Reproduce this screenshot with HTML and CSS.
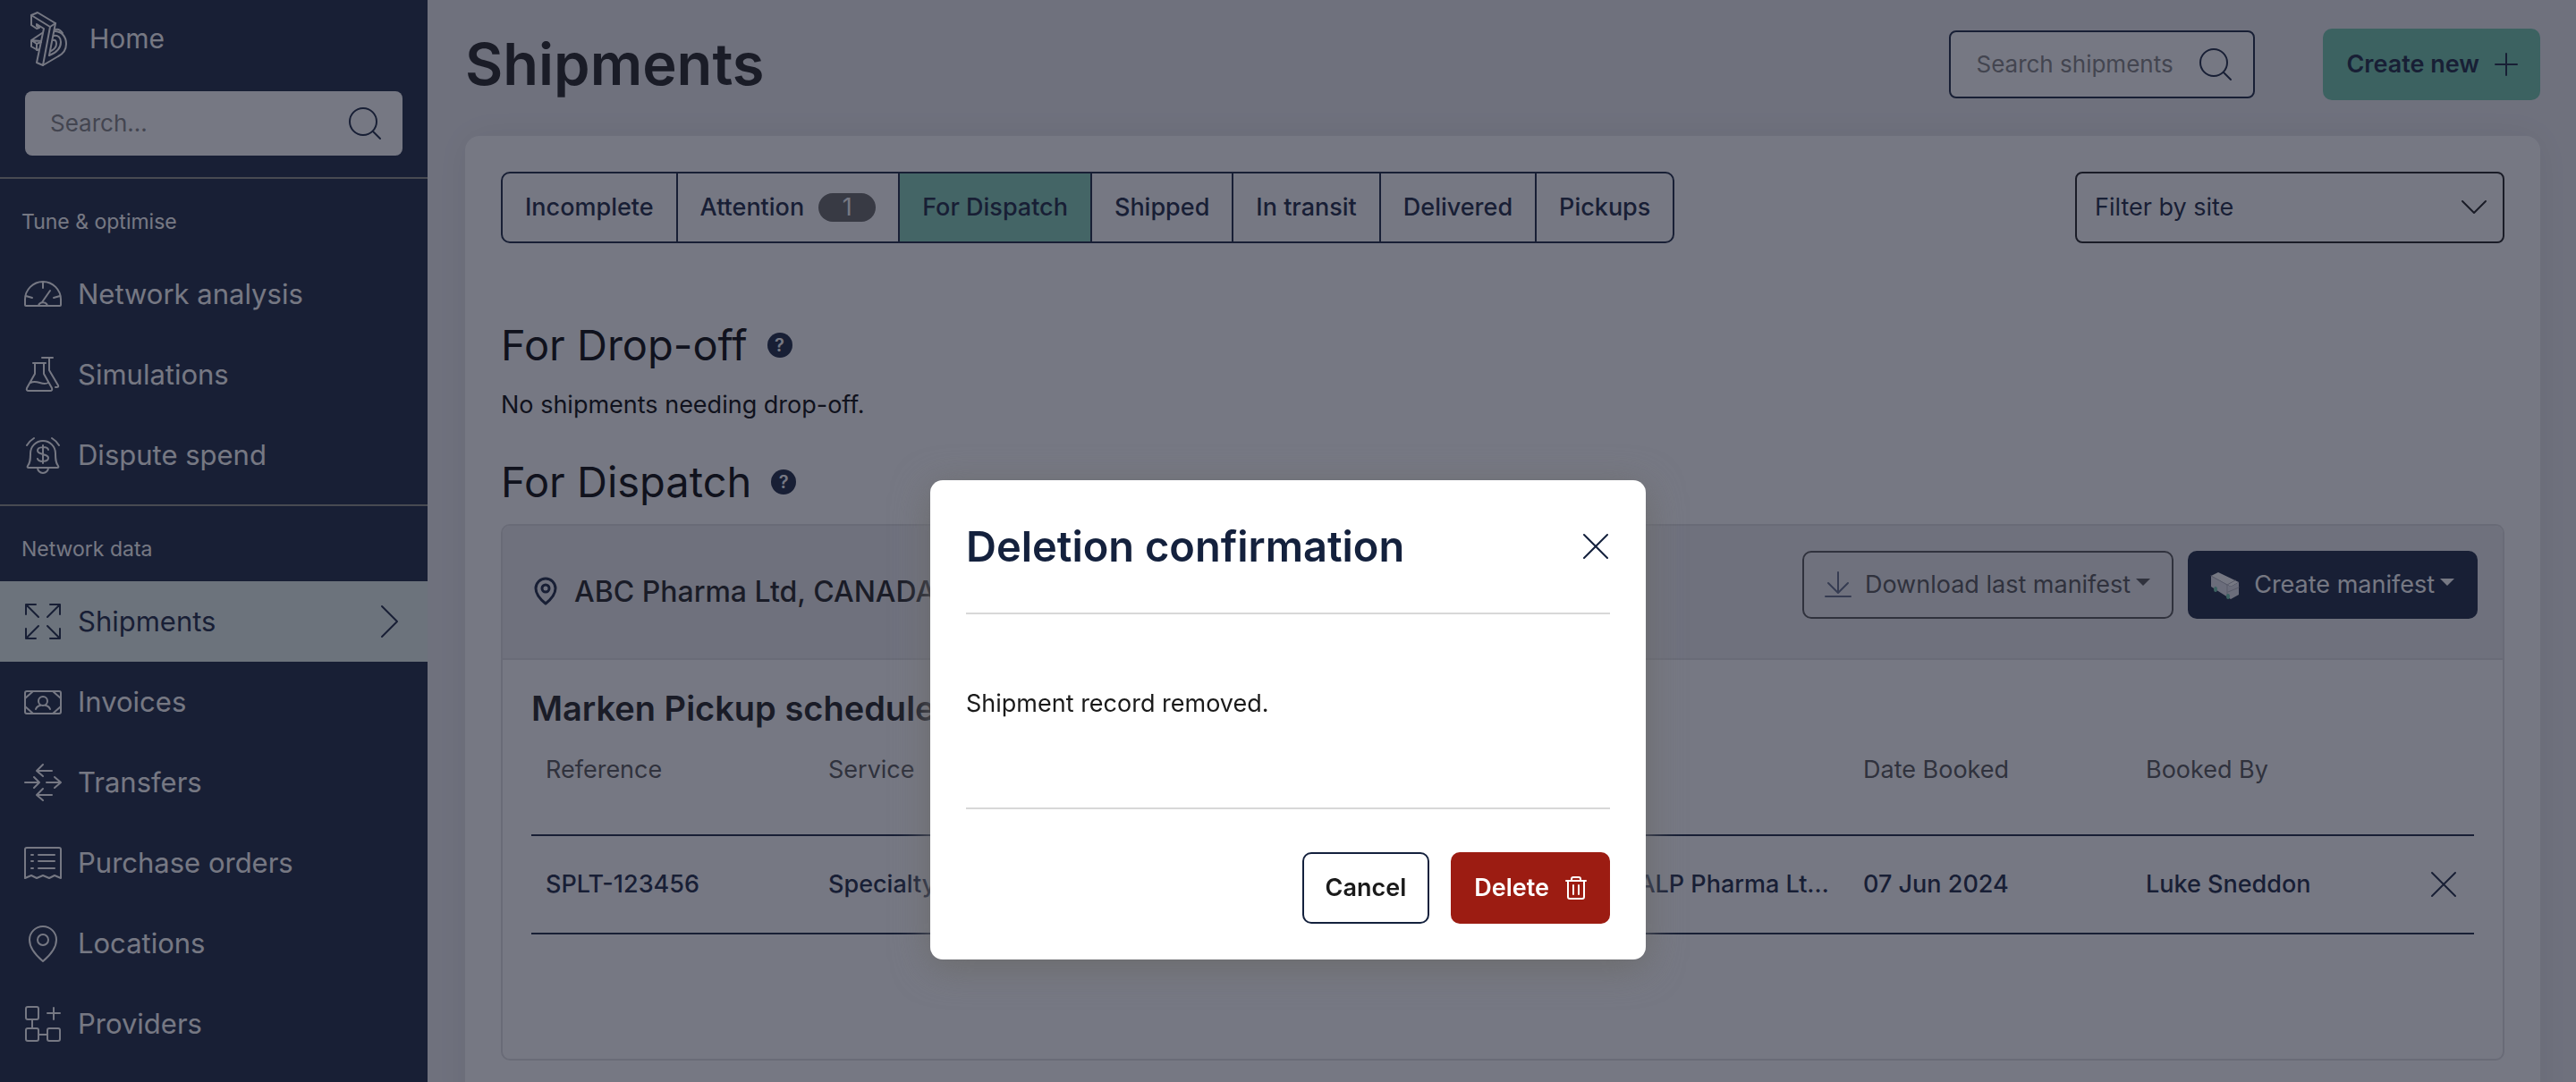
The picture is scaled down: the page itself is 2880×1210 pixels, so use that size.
FILE: index.html
```html
<!DOCTYPE html>
<html lang="en">
<head>
    <meta charset="UTF-8">
    <meta name="viewport" content="width=device-width, initial-scale=1.0">
    <title>Shipments</title>
    <link rel="stylesheet" href="styles.css">
</head>
<body>
    <div class="app">
        <aside class="sidebar">
            <a class="home-link" href="#">
                <svg class="logo" viewBox="0 0 42 61" aria-hidden="true">
                    <path d="M1 4 8 1l20 12-6 4Z"/>
                    <path d="M1 4v11l6 4 3-1-3-2v-2l8 5L7 57l7 3 8-43"/>
                    <path d="M28 13 21 49"/>
                    <path d="M27 22c8 0 13 6 13 14 0 6-3 11-9 14l-17 10"/>
                    <path d="M26 27c5-1 8 2 8 7 0 7-5 12-13 15"/>
                    <path d="M25 32c3-1 4 1 4 4 0 4-2 6-6 8"/>
                    <path d="M28 20c3-1 6 1 8 4M13 24 1 32v7l7 4 2-1M1 32l6 4v7M7 36l5-2M1 32l11 1"/>
                </svg>
                <span>Home</span>
            </a>
            <form class="sidebar-search">
                <input type="text" placeholder="Search..." aria-label="Search">
                <button class="icon-button" type="submit" aria-label="Search">
                    <svg class="icon-search" viewBox="0 0 36 36" aria-hidden="true"><circle cx="16" cy="16" r="15"/><path d="m27 27 8 8"/></svg>
                </button>
            </form>

            <nav class="nav-group">
                <h2>Tune &amp; optimise</h2>
                <a class="nav-item" href="#">
                    <svg class="nav-icon" viewBox="0 0 42 42" aria-hidden="true"><path d="M1 33v-6a20 20 0 0 1 40 0v6q0 1-1 1H2q-1 0-1-1ZM21 8v6M2 23l7 2M40 23l-7 2M29 17l-9 13M16 34c1-5 9-5 10 0"/></svg>
                    <span>Network analysis</span>
                </a>
                <a class="nav-item" href="#">
                    <svg class="nav-icon" viewBox="0 0 42 42" aria-hidden="true"><path d="M10 8h14M12 8v12L3 36q-1 3 2 3h24q3 0 2-3L22 20V8M7 30c8-4 13 4 20 0M20 2h12M28 2v14l10 17q1 2-2 2h-1"/></svg>
                    <span>Simulations</span>
                </a>
                <a class="nav-item" href="#">
                    <svg class="nav-icon" viewBox="0 0 42 42" aria-hidden="true"><path d="M4 33c3-4 3-8 3-14a14 14 0 0 1 28 0c0 6 0 10 3 14q1 2-1 2H5q-2 0-1-2ZM15 35a6 6 0 0 0 12 0M3 10q3-5 8-8M39 10q-3-5-8-8M21 10v20M27 15c-1-4-12-4-12 1s12 3 12 8-11 5-12 1"/></svg>
                    <span>Dispute spend</span>
                </a>
            </nav>

            <nav class="nav-group">
                <h2>Network data</h2>
                <a class="nav-item active" href="#">
                    <svg class="nav-icon" viewBox="0 0 42 42" aria-hidden="true"><path d="M2 13V2h11M2 2l14 14M29 2h11v11M40 2 26 16M2 29v11h11M2 40l14-14M29 40h11V29M40 40 26 26"/></svg>
                    <span>Shipments</span>
                    <svg class="chevron" viewBox="0 0 20 36" aria-hidden="true"><path d="m1 1 17 17L1 35"/></svg>
                </a>
                <a class="nav-item" href="#">
                    <svg class="nav-icon" viewBox="0 0 42 42" aria-hidden="true"><rect x="1" y="9" width="40" height="25" rx="2"/><path d="m1 17 9-8M41 17l-9-8M1 26l9 8M41 26l-9 8M13 29c1-3 4-4 5-4M29 29c-1-3-4-4-5-4"/><circle cx="21" cy="20" r="5"/></svg>
                    <span>Invoices</span>
                </a>
                <a class="nav-item" href="#">
                    <svg class="nav-icon" viewBox="0 0 42 42" aria-hidden="true"><path d="M31 8H15M21 1l-7 7 7 6M1 21h16M11 15l6 6-6 6M25 21h16M34 15l7 6-7 6M31 35H15M21 28l-7 7 7 6"/></svg>
                    <span>Transfers</span>
                </a>
                <a class="nav-item" href="#">
                    <svg class="nav-icon" viewBox="0 0 42 42" aria-hidden="true"><path d="M1 38V6q0-2 2-2h36q2 0 2 2v32l-7-3-6 3-7-3-7 3-6-3ZM16 12h18M16 19h18M16 27h18M8 12h2M8 19h2M8 27h2"/></svg>
                    <span>Purchase orders</span>
                </a>
                <a class="nav-item" href="#">
                    <svg class="nav-icon" viewBox="0 0 42 42" aria-hidden="true"><path d="M21 41C15 36 6 27 6 17a15 15 0 0 1 30 0c0 10-9 19-15 24Z"/><circle cx="21" cy="17" r="6"/></svg>
                    <span>Locations</span>
                </a>
                <a class="nav-item" href="#">
                    <svg class="nav-icon" viewBox="0 0 42 42" aria-hidden="true"><rect x="2" y="2" width="14" height="14" rx="2"/><rect x="2" y="26" width="14" height="14" rx="2"/><rect x="26" y="26" width="14" height="14" rx="2"/><path d="M9 16v10M16 33h10M33 3v13M26 9h14"/></svg>
                    <span>Providers</span>
                </a>
            </nav>
        </aside>

        <main class="main">
            <header class="page-header">
                <h1>Shipments</h1>
                <form class="page-search">
                    <input type="text" placeholder="Search shipments" aria-label="Search shipments">
                    <button class="icon-button" type="submit" aria-label="Search">
                        <svg class="icon-search" viewBox="0 0 36 36" aria-hidden="true"><circle cx="16" cy="16" r="15"/><path d="m27 27 8 8"/></svg>
                    </button>
                </form>
                <button class="btn btn-create" type="button">
                    Create new
                    <svg class="icon-plus" viewBox="0 0 24 24" aria-hidden="true"><path d="M12 0v24M0 12h24"/></svg>
                </button>
            </header>

            <section class="card">
                <div class="toolbar">
                    <div class="tabs">
                        <button type="button">Incomplete</button>
                        <button type="button">Attention <span class="badge">1</span></button>
                        <button type="button" class="selected">For Dispatch</button>
                        <button type="button">Shipped</button>
                        <button type="button">In transit</button>
                        <button type="button">Delivered</button>
                        <button type="button">Pickups</button>
                    </div>
                    <div class="site-filter">
                        <select aria-label="Filter by site">
                            <option>Filter by site</option>
                        </select>
                        <svg class="select-arrow" viewBox="0 0 28 16" aria-hidden="true"><path d="m1 1 13 13L27 1"/></svg>
                    </div>
                </div>

                <h2 class="section-title">For Drop-off <span class="help">?</span></h2>
                <p class="empty-text">No shipments needing drop-off.</p>

                <h2 class="section-title">For Dispatch <span class="help">?</span></h2>
                <div class="dispatch-box">
                    <div class="dispatch-header">
                        <svg class="icon-pin" viewBox="0 0 24 30" aria-hidden="true"><path d="M12 29C7 25 1 19 1 12a11 11 0 0 1 22 0c0 7-6 13-11 17Z"/><circle cx="12" cy="12" r="4"/></svg>
                        <h3>ABC Pharma Ltd, CANADA</h3>
                        <button class="btn btn-download" type="button">
                            <svg class="icon-download" viewBox="0 0 28 28" aria-hidden="true"><path d="M14 0v23M3 12l11 11 11-11M0 27h28"/></svg>
                            Download last manifest
                            <span class="caret"></span>
                        </button>
                        <button class="btn btn-manifest" type="button">
                            <svg class="icon-truck" viewBox="0 0 32 31" aria-hidden="true">
                                <path class="truck-roof" d="m0 5 8-4 23 11-9 5Z"/>
                                <path class="truck-side" d="m0 5 22 12 9-5v14l-9 5L0 17Z"/>
                                <path class="truck-edge" d="m0 5 18 10v12M18 15l9-5M19 23l12-5"/>
                                <ellipse class="truck-wheel" cx="5" cy="20" rx="2" ry="3"/>
                                <ellipse class="truck-wheel" cx="19" cy="28" rx="2" ry="3"/>
                            </svg>
                            Create manifest
                            <span class="caret"></span>
                        </button>
                    </div>
                    <div class="dispatch-body">
                        <h3>Marken Pickup scheduled</h3>
                        <table>
                            <colgroup>
                                <col class="col-std">
                                <col class="col-std">
                                <col>
                                <col class="col-std">
                                <col class="col-std">
                                <col class="col-std">
                                <col class="col-action">
                            </colgroup>
                            <thead>
                                <tr>
                                    <th>Reference</th>
                                    <th>Service</th>
                                    <th>From</th>
                                    <th>To</th>
                                    <th>Date Booked</th>
                                    <th>Booked By</th>
                                    <th></th>
                                </tr>
                            </thead>
                            <tbody>
                                <tr>
                                    <td>SPLT-123456</td>
                                    <td>Specialty</td>
                                    <td>ABC Pharma Ltd</td>
                                    <td>Site: ALP Pharma Ltd, Canada</td>
                                    <td>07 Jun 2024</td>
                                    <td>Luke Sneddon</td>
                                    <td>
                                        <button class="icon-button" type="button" aria-label="Delete shipment">
                                            <svg class="icon-close" viewBox="0 0 26 26" aria-hidden="true"><path d="m0 0 26 26M26 0 0 26"/></svg>
                                        </button>
                                    </td>
                                </tr>
                            </tbody>
                        </table>
                    </div>
                </div>
            </section>
        </main>
    </div>

    <div class="overlay">
        <div class="modal" role="dialog" aria-modal="true" aria-labelledby="modalTitle">
            <div class="modal-header">
                <h2 id="modalTitle">Deletion confirmation</h2>
                <button class="icon-button" type="button" aria-label="Close">
                    <svg class="icon-close" viewBox="0 0 26 26" aria-hidden="true"><path d="m0 0 26 26M26 0 0 26"/></svg>
                </button>
            </div>
            <div class="modal-body">
                <p>Shipment record removed.</p>
            </div>
            <div class="modal-footer">
                <button class="btn btn-cancel" type="button">Cancel</button>
                <button class="btn btn-delete" type="button">
                    Delete
                    <svg class="icon-trash" viewBox="0 0 24 26" aria-hidden="true"><path d="M1 5h22M3 5v18q0 2 2 2h14q2 0 2-2V5M7 5V3q0-2 2-2h6q2 0 2 2v2M9 10v10M15 10v10"/></svg>
                </button>
            </div>
        </div>
    </div>
</body>
</html>
```
FILE: styles.css
```css
* {
    box-sizing: border-box;
}
body {
    margin: 0;
    font-family: Inter, "Liberation Sans", sans-serif;
    font-size: 27px;
    line-height: 32px;
    color: #1a1a1a;
    background-color: #eeeef1;
}
h1, h2, h3, p {
    margin: 0;
}
a {
    color: inherit;
    text-decoration: none;
}
button, input, select {
    font: inherit;
    color: inherit;
}
button {
    cursor: pointer;
}
svg {
    display: block;
    flex: none;
    fill: none;
    stroke: currentColor;
    stroke-width: 2px;
    stroke-linecap: round;
    stroke-linejoin: round;
    overflow: visible;
}
.app {
    display: flex;
    height: 100vh;
    overflow: hidden;
}

/* Sidebar */
.sidebar {
    flex: none;
    width: 478px;
    background-color: #14213d;
    color: #fff;
    overflow: hidden;
}
.home-link {
    display: flex;
    align-items: center;
    gap: 24px;
    height: 86px;
    padding: 0 34px;
    font-size: 30px;
}
.logo {
    width: 42px;
    height: 61px;
}
.sidebar-search, .page-search {
    display: flex;
    align-items: center;
    background-color: #fff;
    border-radius: 8px;
    color: #14213d;
    font-size: 26px;
}
.sidebar-search {
    height: 72px;
    margin: 16px 28px 24px;
    padding: 0 24px 0 28px;
}
.sidebar-search input, .page-search input {
    flex: 1;
    min-width: 0;
    padding: 0;
    border: none;
    outline: none;
    background: none;
}
input::placeholder {
    color: #808080;
    opacity: 1;
}
.icon-button {
    display: block;
    padding: 0;
    border: none;
    background: none;
}
.icon-search {
    width: 36px;
    height: 36px;
}
.nav-group {
    padding-bottom: 10px;
    border-top: 2px solid #8c8c84;
}
.nav-group h2 {
    padding: 32px 24px 20px;
    font-size: 23px;
    font-weight: 400;
}
.nav-item {
    display: flex;
    align-items: center;
    gap: 18px;
    height: 90px;
    padding: 0 32px 0 27px;
    font-size: 31px;
}
.nav-item.active {
    background-color: #e6f2ee;
    color: #14213d;
}
.nav-icon {
    width: 42px;
    height: 42px;
}
.chevron {
    width: 20px;
    height: 36px;
    margin-left: auto;
}

/* Page header */
.main {
    flex: 1;
    min-width: 0;
    padding: 0 40px 0 42px;
}
.page-header {
    display: flex;
    align-items: center;
    height: 144px;
    margin-bottom: 8px;
}
.page-header h1 {
    margin-right: auto;
    font-size: 65px;
    line-height: 80px;
    font-weight: 600;
}
.page-search {
    width: 342px;
    height: 76px;
    margin-right: 76px;
    padding: 0 24px 0 28px;
    border: 2px solid #14213d;
}
.btn {
    display: flex;
    align-items: center;
    height: 80px;
    padding: 0 24px;
    border: 2px solid transparent;
    border-radius: 10px;
    font-weight: 600;
    white-space: nowrap;
}
.btn-create {
    gap: 18px;
    color: #14213d;
    background-color: #6ec8aa;
}
.icon-plus {
    width: 24px;
    height: 24px;
}

/* Card */
.card {
    min-height: 1100px;
    padding: 40px;
    background-color: #fff;
    border-radius: 16px;
    box-shadow: 0 0 40px rgba(0, 0, 0, 0.08);
}
.toolbar {
    display: flex;
    justify-content: space-between;
    margin-bottom: 88px;
}
.tabs {
    display: flex;
    height: 80px;
    border: 2px solid #14213d;
    border-radius: 10px;
    overflow: hidden;
}
.tabs button {
    display: flex;
    align-items: center;
    gap: 16px;
    padding: 0 25px;
    border: none;
    border-right: 2px solid #14213d;
    background: none;
    color: #14213d;
    font-weight: 500;
    white-space: nowrap;
}
.tabs button:last-child {
    border-right: none;
}
.tabs .selected {
    background-color: #82cfb6;
}
.badge {
    width: 64px;
    border-radius: 16px;
    background-color: #646462;
    color: #fff;
    font-weight: 400;
}
.site-filter {
    position: relative;
    width: 480px;
}
.site-filter select {
    width: 100%;
    height: 80px;
    padding: 0 20px;
    border: 2px solid #1a1a1a;
    border-radius: 8px;
    background: none;
    color: #14213d;
    appearance: none;
}
.select-arrow {
    position: absolute;
    top: 32px;
    right: 20px;
    width: 28px;
    height: 16px;
    pointer-events: none;
}
.section-title {
    display: flex;
    align-items: center;
    gap: 22px;
    font-size: 47px;
    line-height: 52px;
    font-weight: 400;
    color: #000;
}
.help {
    width: 28px;
    height: 28px;
    border-radius: 14px;
    background-color: #14213d;
    color: #fff;
    font-size: 20px;
    line-height: 28px;
    font-weight: 600;
    text-align: center;
}
.empty-text {
    margin: 25px 0 44px;
    color: #000;
}

/* Dispatch box */
.dispatch-box {
    height: 600px;
    margin-top: 21px;
    border: 2px solid #dedee0;
    border-radius: 10px;
    overflow: hidden;
}
.dispatch-header {
    display: flex;
    align-items: flex-start;
    height: 150px;
    padding: 28px 28px 0 36px;
    border-bottom: 2px solid #dedee0;
    background-color: #eeeef1;
}
.icon-pin {
    width: 24px;
    height: 30px;
    margin-top: 30px;
    color: #14213d;
    stroke-width: 3px;
}
.dispatch-header h3 {
    margin: 30px auto 0 20px;
    font-size: 32px;
    font-weight: 500;
}
.dispatch-header .btn {
    height: 76px;
    font-weight: 400;
}
.btn-download {
    margin-right: 16px;
    border-color: #505050;
    background: none;
    color: #505050;
}
.btn-manifest {
    background-color: #14213d;
    color: #fff;
}
.icon-download {
    width: 28px;
    height: 28px;
    margin-right: 16px;
    color: #5f6a86;
}
.icon-truck {
    width: 32px;
    height: 31px;
    margin-right: 16px;
    stroke: none;
}
.truck-roof {
    fill: #fff;
}
.truck-side {
    fill: #e4e4ea;
}
.truck-edge {
    stroke: #b4b4be;
    stroke-width: 1px;
}
.truck-wheel {
    fill: #6ec8aa;
}
.caret {
    margin: 0 0 6px 6px;
    border: 8px solid transparent;
    border-top-color: currentColor;
    border-bottom: none;
}
.dispatch-body {
    padding: 32px;
}
.dispatch-body h3 {
    font-size: 38px;
    line-height: 44px;
    font-weight: 600;
}
table {
    width: 100%;
    border-collapse: collapse;
    table-layout: fixed;
}
.col-std {
    width: 316px;
}
.col-action {
    width: 67px;
}
th, td {
    padding: 0 16px;
    text-align: left;
    white-space: nowrap;
    overflow: hidden;
    text-overflow: ellipsis;
    border-bottom: 2px solid #14213d;
}
th {
    height: 120px;
    padding-bottom: 26px;
    font-weight: 400;
    color: #505050;
}
td {
    height: 110px;
    font-weight: 500;
    color: #14213d;
}
td:last-child {
    padding: 0 0 0 20px;
}
.icon-close {
    width: 26px;
    height: 26px;
}

/* Modal */
.overlay {
    position: fixed;
    inset: 0;
    display: flex;
    justify-content: center;
    align-items: flex-start;
    padding-top: 537px;
    background-color: rgba(27, 30, 48, 0.6);
}
.modal {
    width: 800px;
    padding: 0 40px 40px;
    border-radius: 14px;
    background-color: #fff;
    box-shadow: 0 8px 40px #6c6c6c;
}
.modal-header, .modal-footer {
    display: flex;
    align-items: center;
}
.modal-header {
    justify-content: space-between;
    height: 150px;
    padding-right: 3px;
    border-bottom: 2px solid #d8d8d8;
    color: #14213d;
}
.modal-header h2 {
    font-size: 47px;
    line-height: 52px;
    font-weight: 600;
}
.modal-body {
    padding: 84px 0 100px;
    border-bottom: 2px solid #d8d8d8;
}
.modal-footer {
    justify-content: flex-end;
    gap: 24px;
    padding-top: 48px;
}
.btn-cancel {
    border-color: #14213d;
    background-color: #fff;
    color: #1a1a1a;
}
.btn-delete {
    gap: 18px;
    background-color: #9c1c12;
    color: #fff;
}
.icon-trash {
    width: 24px;
    height: 26px;
}
```
